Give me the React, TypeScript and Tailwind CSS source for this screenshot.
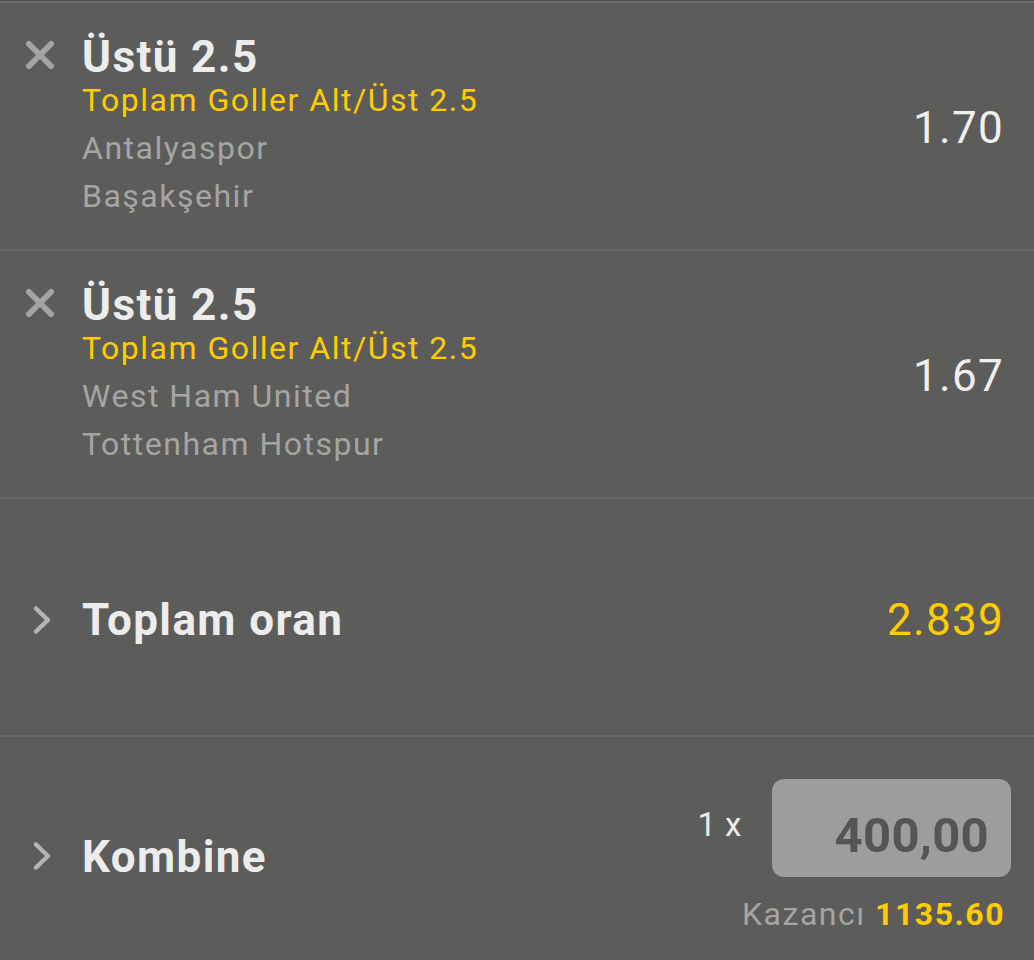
import React from "react";

const XIcon = () => (
  <svg width="32" height="32" viewBox="0 0 32 32">
    <path d="M5 5 L27 27 M27 5 L5 27" stroke="#a3a3a1" strokeWidth="6" strokeLinecap="round" />
  </svg>
);

const Chevron = () => (
  <svg width="22" height="30" viewBox="0 0 22 30">
    <path d="M4 3.5 L16 15 L4 26.5" stroke="#b3b3b1" strokeWidth="4.5" fill="none" strokeLinecap="round" strokeLinejoin="round" />
  </svg>
);

const Bet = ({ home, away, odd }: { home: string; away: string; odd: string }) => (
  <div className="flex h-[248px] border-b-2 border-[#676765]">
    <div className="w-[82px] shrink-0 pl-[24px] pt-[36px]">
      <XIcon />
    </div>
    <div className="flex-1 pt-[28px]">
      <div className="text-[44px] font-bold leading-[52px] text-[#ececec] tracking-[1.4px]">Üstü 2.5</div>
      <div className="text-[32px] leading-[44px] text-[#ffcc00] tracking-[1.5px] mt-[-5px]">Toplam Goller Alt/Üst 2.5</div>
      <div className="text-[32px] leading-[48px] text-[#a5a5a3] tracking-[1.5px] mt-[2px]">{home}</div>
      <div className="text-[32px] leading-[48px] text-[#a5a5a3] tracking-[1.5px]">{away}</div>
    </div>
    <div className="flex items-center pr-[30px] pt-[4px] text-[44px] text-[#f0f0f0] tracking-[1.3px]">{odd}</div>
  </div>
);

export default function App() {
  return (
    <div
      className="w-[1034px] h-[960px] bg-[#5c5c5b] overflow-hidden"
      style={{ fontFamily: "Roboto, 'Noto Sans', sans-serif" }}
    >
      <div className="h-[1px] bg-[#505050]" />
      <div className="h-[2px] bg-[#6c6c6a]" />
      <Bet home="Antalyaspor" away="Başakşehir" odd="1.70" />
      <Bet home="West Ham United" away="Tottenham Hotspur" odd="1.67" />
      <div className="flex items-center h-[238px] border-b-2 border-[#676765] pt-[6px]">
        <div className="w-[82px] shrink-0 pl-[32px] flex items-center">
          <Chevron />
        </div>
        <div className="flex-1 text-[44px] font-bold text-[#ececec] tracking-[1.4px]">Toplam oran</div>
        <div className="pr-[30px] text-[44px] text-[#ffcc00] tracking-[1.3px]">2.839</div>
      </div>
      <div className="flex h-[222px]">
        <div className="w-[82px] shrink-0 pl-[32px] pt-[104px]">
          <Chevron />
        </div>
        <div className="flex-1 pt-[95px] text-[44px] font-bold text-[#ececec] tracking-[1.4px] leading-[50px]">Kombine</div>
        <div className="flex flex-col items-end pr-[23px] pt-[42px]">
          <div className="flex items-center">
            <div className="text-[33px] text-[#ececec] mr-[30px] mb-[6px] tracking-[0.5px]">1 x</div>
            <div className="w-[239px] h-[98px] rounded-[12px] bg-[#9d9d9b] flex items-center justify-end pr-[22px] pt-[14px] text-[49px] leading-none font-bold text-[#555554] tracking-[0.3px]">
              400,00
            </div>
          </div>
          <div className="mt-[17px] pr-[6px] text-[32px] leading-[40px] tracking-[1.5px]">
            <span className="text-[#a5a5a3]">Kazancı </span>
            <span className="text-[#ffcc00] font-bold">1135.60</span>
          </div>
        </div>
      </div>
    </div>
  );
}
